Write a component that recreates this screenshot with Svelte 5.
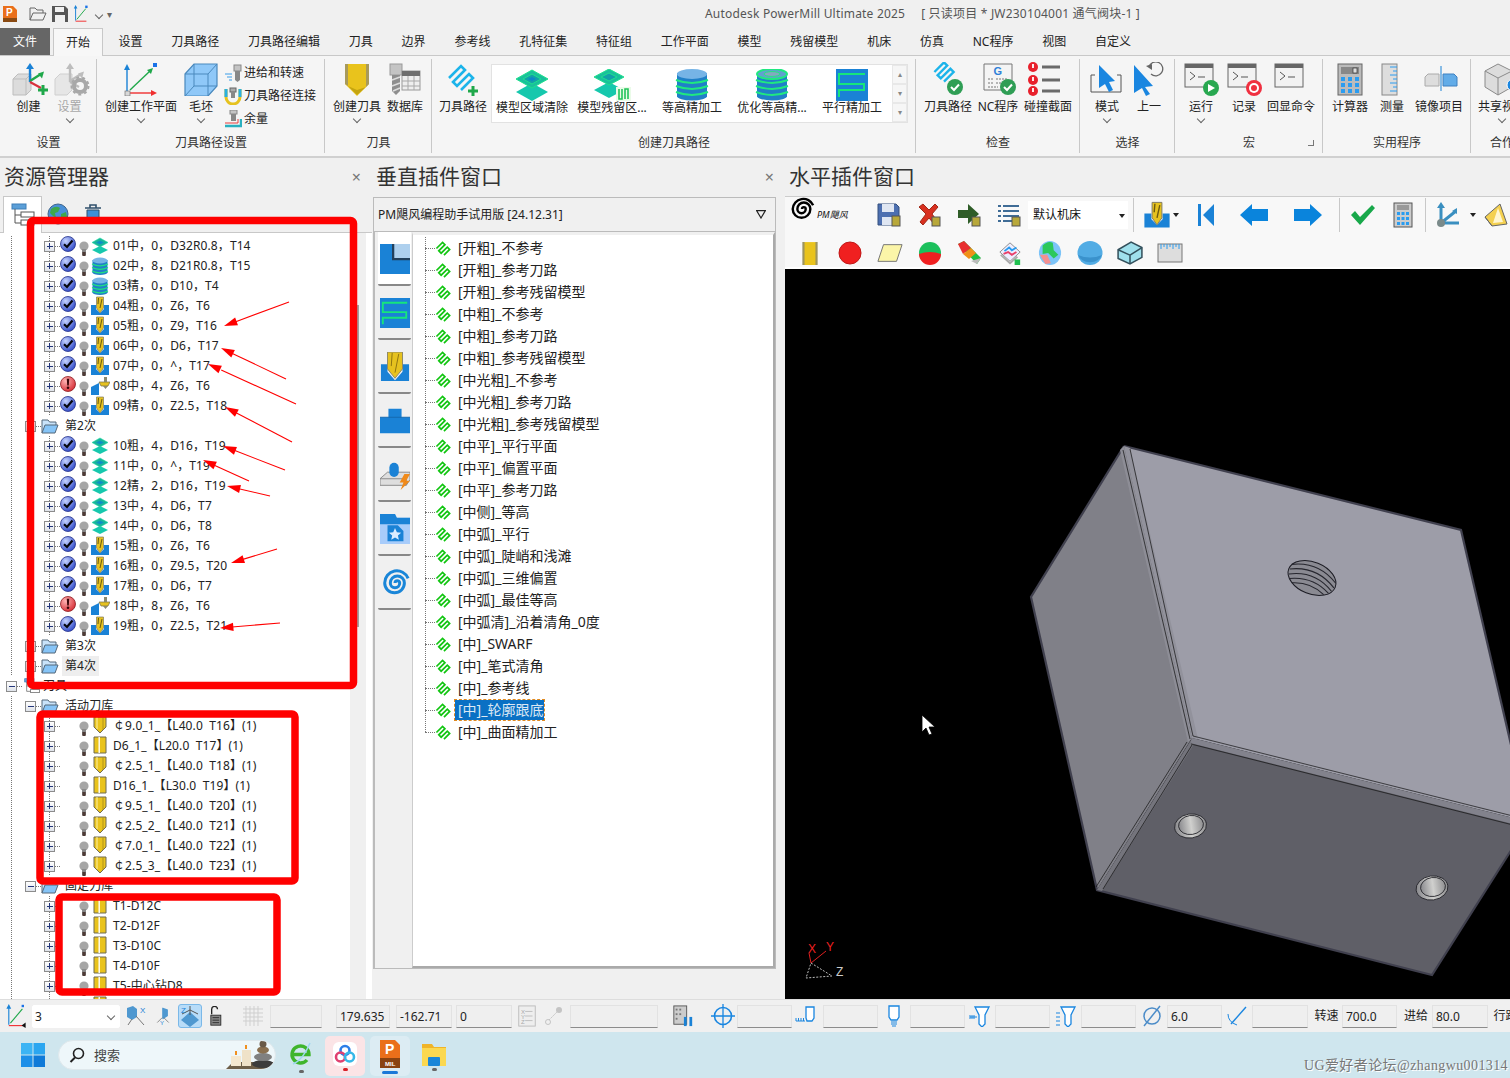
<script lang="ts">
  // PowerMill main window: ribbon, explorer tree, plugin panels, 3D view, status bar, taskbar.
  type Item = { l?: string; i?: string; w?: number; chev?: boolean; dis?: boolean; stack?: boolean; gallery?: boolean };

  const tabs = ['设置', '刀具路径', '刀具路径编辑', '刀具', '边界', '参考线', '孔特征集', '特征组', '工作平面', '模型', '残留模型', '机床', '仿真', 'NC程序', '视图', '自定义'];

  const groups: { label: string; w: number; pad: number; items: Item[] }[] = [
    { label: '设置', w: 97, pad: 8, items: [{ l: '创建', i: 'r-create', w: 41 }, { l: '设置', i: 'r-setup', w: 41, chev: true, dis: true }] },
    { label: '刀具路径设置', w: 228, pad: 4, items: [{ l: '创建工作平面', i: 'r-wp', w: 80, chev: true }, { l: '毛坯', i: 'r-stock', w: 40, chev: true }, { stack: true }] },
    { label: '刀具', w: 107, pad: 6, items: [{ l: '创建刀具', i: 'r-tool', w: 52, chev: true }, { l: '数据库', i: 'r-db', w: 44 }] },
    { label: '创建刀具路径', w: 484, pad: 5, items: [{ l: '刀具路径', i: 'r-tp', w: 52 }, { gallery: true }] },
    { label: '检查', w: 164, pad: 7, items: [{ l: '刀具路径', i: 'c-tp', w: 50 }, { l: 'NC程序', i: 'c-nc', w: 50 }, { l: '碰撞截面', i: 'c-col', w: 50 }] },
    { label: '选择', w: 95, pad: 6, items: [{ l: '模式', i: 's-mode', w: 42, chev: true }, { l: '上一', i: 's-prev', w: 42 }] },
    { label: '宏', w: 148, pad: 5, items: [{ l: '运行', i: 'm-run', w: 42, chev: true }, { l: '记录', i: 'm-rec', w: 44 }, { l: '回显命令', i: 'm-echo', w: 50 }] },
    { label: '实用程序', w: 148, pad: 6, items: [{ l: '计算器', i: 'u-calc', w: 42 }, { l: '测量', i: 'u-meas', w: 42 }, { l: '镜像项目', i: 'u-mir', w: 52 }] },
    { label: '合作', w: 62, pad: 0, items: [{ l: '共享视图', i: 'u-share', w: 62, chev: true }] }
  ];

  const smalls = [['进给和转速', 'sm-feed'], ['刀具路径连接', 'sm-link'], ['余量', 'sm-stock']];
  const gallery = [['模型区域清除', 'g-layer'], ['模型残留区...', 'g-rest'], ['等高精加工', 'g-db'], ['优化等高精...', 'g-db2'], ['平行精加工', 'g-par']];

  const op = (t: string, i: string, err = false) => ({ kind: 'op', t, i, err });
  const folder = (t: string, open = false, hover = false) => ({ kind: 'folder', t, open, hover });
  const tool = (t: string, flat = false) => ({ kind: 'tool', t, flat });

  const rows: any[] = [
    op('01中，0，D32R0.8，T14', 'o-layer'), op('02中，8，D21R0.8，T15', 'o-db'), op('03精，0，D10，T4', 'o-db'),
    op('04粗，0，Z6，T6', 'o-drill'), op('05粗，0，Z9，T16', 'o-drill'), op('06中，0，D6，T17', 'o-drill'),
    op('07中，0，^，T17', 'o-drill'), op('08中，4，Z6，T6', 'o-plug', true), op('09精，0，Z2.5，T18', 'o-drill'),
    folder('第2次'),
    op('10粗，4，D16，T19', 'o-layer'), op('11中，0，^，T19', 'o-layer'), op('12精，2，D16，T19', 'o-layer'),
    op('13中，4，D6，T7', 'o-layer'), op('14中，0，D6，T8', 'o-layer'), op('15粗，0，Z6，T6', 'o-drill'),
    op('16粗，0，Z9.5，T20', 'o-drill'), op('17粗，0，D6，T7', 'o-drill'), op('18中，8，Z6，T6', 'o-plug', true),
    op('19粗，0，Z2.5，T21', 'o-drill'),
    folder('第3次'), folder('第4次', false, true),
    { kind: 'root', t: '刀具' },
    folder('活动刀库', true),
    tool('￠9.0_1_【L40.0  T16】(1)'), tool('D6_1_【L20.0  T17】(1)', true), tool('￠2.5_1_【L40.0  T18】(1)'),
    tool('D16_1_【L30.0  T19】(1)', true), tool('￠9.5_1_【L40.0  T20】(1)'), tool('￠2.5_2_【L40.0  T21】(1)'),
    tool('￠7.0_1_【L40.0  T22】(1)'), tool('￠2.5_3_【L40.0  T23】(1)'),
    folder('固定刀库', true),
    tool('T1-D12C', true), tool('T2-D12F', true), tool('T3-D10C', true), tool('T4-D10F', true), tool('T5-中心钻D8', true), tool('', true)
  ];

  const strategies = ['[开粗]_不参考', '[开粗]_参考刀路', '[开粗]_参考残留模型', '[中粗]_不参考', '[中粗]_参考刀路', '[中粗]_参考残留模型', '[中光粗]_不参考', '[中光粗]_参考刀路', '[中光粗]_参考残留模型', '[中平]_平行平面', '[中平]_偏置平面', '[中平]_参考刀路', '[中侧]_等高', '[中弧]_平行', '[中弧]_陡峭和浅滩', '[中弧]_三维偏置', '[中弧]_最佳等高', '[中弧清]_沿着清角_0度', '[中]_SWARF', '[中]_笔式清角', '[中]_参考线', '[中]_轮廓跟底', '[中]_曲面精加工'];
  const sideTabs = ['v-corner', 'g-par', 'v-drill', 'v-boss', 'v-lightning', 'v-star', 'v-spiral'];

  const bar1 = [['t-save', 38], ['t-x', 41], ['t-arrow', 40], ['t-list', 39]];
  const bar2 = ['b-tool', 'b-red', 'b-para', 'b-gr', 'b-cone', 'b-sheet', 'b-globe', 'b-ball', 'b-box', 'b-ruler'];

  // letters that sit on an icon, drawn next to its <use>: [text, x, y, size, colour, weight]
  const iconText: Record<string, any[][]> = {
    'c-nc': [['G', 19.5, 13, 11, '#2f7fd8', 700]],
    's-x': [['X', 14, 8, 8, '#1a82d6', 400]],
    's-y': [['Y', 6, 18, 6, '#1a82d6', 400]],
    's-z': [['Z', 2, 8, 8, '#1a82d6', 400]],
    's-xyz': [['X', 5, 9, 6, '#aaa', 400], ['Y', 5, 14, 6, '#aaa', 400], ['Z', 5, 19, 6, '#aaa', 400]]
  };

  // status bar, left to right: icon slots, input fields and text slots with their widths
  const status: any[] = [
    { w: 32, i: 's-wp', s: 24 }, { f: 88, combo: '3' }, { w: 34, i: 's-x', s: 22 }, { w: 18, i: 's-y', s: 18 }, { w: 6 }, { w: 24, i: 's-z', s: 22, on: true },
    { w: 26, i: 's-lock', s: 20 }, { w: 8 }, { w: 34, i: 's-grid', s: 22 }, { f: 52 }, { w: 14 }, { f: 54, t: '179.635' }, { w: 6 }, { f: 56, t: '-162.71' }, { w: 4 }, { f: 56, t: '0' },
    { w: 30, i: 's-xyz', s: 22 }, { w: 24, i: 's-link', s: 20 }, { w: 4 }, { f: 88 }, { w: 50, i: 's-bars', s: 22 }, { w: 29, i: 's-cross', s: 24 }, { f: 55 },
    { w: 28, i: 's-t1', s: 22 }, { w: 3 }, { f: 55 }, { w: 32, i: 's-t2', s: 22 }, { f: 55 }, { w: 30, i: 's-t3', s: 22 }, { f: 55 }, { w: 31, i: 's-t4', s: 22 }, { f: 55 },
    { w: 31, i: 's-dia', s: 22 }, { f: 55, t: '6.0' }, { w: 30, i: 's-ang', s: 22 }, { f: 56 }, { w: 34, x: '转速' }, { f: 55, t: '700.0' }, { w: 35, x: '进给' }, { f: 56, t: '80.0' }, { w: 32, x: '行距' }
  ];

  const arrows = [
    [289, 302, 224, 326], [286, 379, 221, 348], [296, 404, 208, 364], [292, 442, 225, 407], [285, 470, 223, 446],
    [249, 481, 203, 460], [270, 496, 227, 486], [277, 549, 231, 563], [280, 623, 220, 628]
  ];
</script>

{#snippet ic(id, w, h)}
  <svg class="ic" width={w} height={h}>
    <use href="#{id}" />
    {#each iconText[id] ?? [] as t}
      <text x={t[1]} y={t[2]} font-size={t[3]} fill={t[4]} font-weight={t[5]} font-family="Liberation Sans">{t[0]}</text>
    {/each}
  </svg>
{/snippet}

<div class="win">
  <svg class="defs" width="0" height="0">
    <defs>
      <radialGradient id="blueball" cx="35%" cy="30%" r="75%"><stop offset="0" stop-color="#c6d4ff" /><stop offset="1" stop-color="#2f49c8" /></radialGradient>
      <radialGradient id="redball" cx="35%" cy="30%" r="75%"><stop offset="0" stop-color="#ffb4b4" /><stop offset="1" stop-color="#d62d35" /></radialGradient>
      <linearGradient id="hole" x1="0" y1="0" x2="1" y2="0"><stop offset="0" stop-color="#88888c" /><stop offset=".5" stop-color="#d0d0ce" /><stop offset="1" stop-color="#8e8e90" /></linearGradient>
    </defs>

    <!-- tree icons -->
    <symbol id="st-ok" viewBox="0 0 16 16"><circle cx="8" cy="8" r="7.5" fill="url(#blueball)" stroke="#23308a" stroke-width=".8" /><path d="M4 8.2 7 11 12.5 4.5" fill="none" stroke="#06070f" stroke-width="2.2" /></symbol>
    <symbol id="st-err" viewBox="0 0 16 16"><circle cx="8" cy="8" r="7.5" fill="url(#redball)" stroke="#8c1a20" stroke-width=".8" /><path d="M6.8 2.8h2.4l-.4 6.6H7.2Z" fill="#3a0508" /><circle cx="8" cy="11.8" r="1.3" fill="#3a0508" /></symbol>
    <symbol id="bulb" viewBox="0 0 12 16"><circle cx="6" cy="6" r="4.6" fill="#a6a6a6" /><rect x="4" y="9" width="4" height="6" fill="#8a8a8a" /><rect x="4.4" y="12" width="3.2" height="4" fill="#4e3b36" /></symbol>
    <symbol id="o-layer" viewBox="0 0 20 16"><path d="M10 8 18 12 10 16 2 12Z" fill="#16c8ad" /><path d="M10 0 18 4.5 10 9 2 4.5Z" fill="#19b39c" stroke="#1ee0a0" stroke-width=".6" /><path d="M10 2.8 13.8 4.5 10 6.3 6.2 4.5Z" fill="#0d8ec7" /></symbol>
    <symbol id="o-db" viewBox="0 0 20 18"><rect x="2.5" y="3" width="15" height="13" fill="#2080c8" /><ellipse cx="10" cy="3.5" rx="7.5" ry="3" fill="#76b4e6" /><ellipse cx="10" cy="15.5" rx="7.5" ry="2.5" fill="#2080c8" /><g fill="none" stroke="#20e080" stroke-width="1.3"><path d="M2 7q8 3.6 16 0" /><path d="M2 10.5q8 3.6 16 0" /><path d="M2 14q8 3.6 16 0" /></g></symbol>
    <symbol id="o-drill" viewBox="0 0 20 20"><path d="M1 9h5v4l4 4 4-4V9h5v10H1Z" fill="#1a82d6" /><path d="M6.500 1h7v11l-3.500 5-3.500-5Z" fill="#e6c21f" stroke="#7f7a62" stroke-width=".7" /><path d="M8.500 2 8 8M12 3l-2 9" stroke="#6e5a10" fill="none" /></symbol>
    <symbol id="o-plug" viewBox="0 0 20 20"><path d="M1 11 9 7v12H1Z" fill="#1a82d6" /><path d="M9 6h11l-2 4H11Z" fill="#e6c21f" stroke="#6e6a50" stroke-width=".7" /><path d="M14 1h3v5h-3ZM13 10h5l-2.500 3Z" fill="#8a8a70" /></symbol>
    <symbol id="tool" viewBox="0 0 14 18"><path d="M1 1h12v10l-6 6-6-6Z" fill="#e9c31c" stroke="#6f6a52" /><path d="M4 1v12" stroke="#fff2a8" /><path d="M10 1v13" stroke="#b09218" /></symbol>
    <symbol id="toolflat" viewBox="0 0 14 18"><path d="M1 1h12v16H1Z" fill="#e9c31c" stroke="#6f6a52" /><path d="M6.200 1v16" stroke="#fff" stroke-width="1.400" /></symbol>
    <symbol id="folder" viewBox="0 0 18 16"><path d="M1 15V2h6l1.600 2H15v3" fill="#c9e3fa" stroke="#55687a" /><path d="M1 15 4 7h13l-3 8Z" fill="#86c4f7" stroke="#55687a" /></symbol>
    <symbol id="zig" viewBox="0 0 18 18"><path d="M1.500 9 8 2.500 10.500 5 4 11.500 6.500 14 13 7.500 15.500 10 9.500 16" fill="none" stroke="#11c511" stroke-width="1.800" /></symbol>
    <symbol id="tree-tab" viewBox="0 0 24 24"><rect x="1" y="1" width="14" height="5" fill="#5b9fd8" stroke="#3f7fb8" /><path d="M4 6v14h6M4 12h6" fill="none" stroke="#555" /><rect x="10" y="9" width="13" height="5" fill="#fff" stroke="#555" /><rect x="10" y="17" width="13" height="5" fill="#fff" stroke="#555" /></symbol>
    <symbol id="globe" viewBox="0 0 22 22"><circle cx="11" cy="11" r="10" fill="#4a90d8" stroke="#40668c" /><path d="M4 6q5-4 9-1l-2 4-3 1 1 5-3-2-3-3Z" fill="#3ea84c" /><path d="M14 11l5-2 1 5-4 4-2-3Z" fill="#3ea84c" /></symbol>
    <symbol id="trash" viewBox="0 0 18 20"><path d="M1 4h16M6 4V1h6v3" fill="none" stroke="#30506c" stroke-width="1.600" /><path d="M3 6h12v13H3Z" fill="#3e8fd8" stroke="#30506c" /></symbol>

    <!-- ribbon, 48x34 -->
    <symbol id="r-create" viewBox="0 0 48 34"><path d="M8 17l5-5h13v16l-5 5H8Z" fill="#dcdcdc" stroke="#bdbdbd" /><path d="M8 17h13v16M21 17l5-5" fill="none" stroke="#bdbdbd" /><path d="M25 20V5" stroke="#1a82d6" stroke-width="2.400" /><path d="M25 1l4 6h-8Z" fill="#1a82d6" /><path d="M25 19 36 12" stroke="#1fa84a" stroke-width="2.400" /><path d="M39 9.500l-2 7-4-5Z" fill="#1fa84a" /><path d="M25 20l11 6" stroke="#d8323c" stroke-width="2.200" /><path d="M33 28h10M38 23v10" stroke="#1fa84a" stroke-width="3" /></symbol>
    <symbol id="r-setup" viewBox="0 0 48 34"><path d="M9 17l5-5h12v16l-5 5H9Z" fill="#e6e6e6" stroke="#cfcfcf" /><path d="M24 20V5M24 19 35 12M24 20l9 5" stroke="#bdbdbd" stroke-width="2.400" /><path d="M24 1l4 6h-8ZM38 9.500l-2 7-4-5Z" fill="#bdbdbd" /><circle cx="34" cy="24" r="6" fill="none" stroke="#a8a8a8" stroke-width="4" /><circle cx="34" cy="24" r="8.500" fill="none" stroke="#a8a8a8" stroke-width="2" stroke-dasharray="3 3" /></symbol>
    <symbol id="r-wp" viewBox="0 0 48 34"><path d="M10 30V6" stroke="#1a82d6" stroke-width="1.400" /><path d="M10 2l3 6H7Z" fill="#1a82d6" /><path d="M13 31h22" stroke="#f03030" stroke-width="1.400" /><path d="M40 31l-6 3v-6Z" fill="#f03030" /><path d="M13 28 33 9" stroke="#1fa84a" stroke-width="1.400" /><path d="M36 6l-2 6-4-4Z" fill="#1fa84a" /><rect x="8" y="29" width="5" height="5" fill="#d8d8d8" stroke="#777" stroke-width=".7" /><rect x="36" y="1" width="4" height="4" fill="#1a72e8" /></symbol>
    <symbol id="r-stock" viewBox="0 0 48 34"><path d="M8 12 17 2h23v22l-9 10H8Z" fill="#8fc8f8" stroke="#4a89bd" stroke-width="1.200" /><path d="M8 12h23v22M31 12l9-10M17 2v22H40M17 24l-9 10" fill="none" stroke="#4a89bd" /></symbol>
    <symbol id="r-tool" viewBox="0 0 48 34"><path d="M12 2h24v20L24 34 12 22Z" fill="#e9c31c" /><path d="M12 2h3v22l-3-2ZM33 2h3v20l-3 3Z" fill="#a89a5a" /><path d="M15 24 24 33 33 25 24 28Z" fill="#c4a410" /></symbol>
    <symbol id="r-db" viewBox="0 0 48 34"><rect x="9" y="2" width="12" height="11" fill="#c4c4c4" stroke="#9a9a9a" /><path d="M11 13h8v16l-4 4-4-4Z" fill="#8e8e8e" /><path d="M11 18l8-3M11 24l8-3M12 29l7-3" stroke="#ddd" stroke-width="1.500" /><rect x="21" y="9" width="18" height="19" fill="#eee" stroke="#9a9a9a" /><rect x="21" y="9" width="18" height="5" fill="#6e6e6e" /><path d="M21 19h18M21 24h18M27 14v14M33 14v14" stroke="#a8a8a8" /></symbol>
    <symbol id="r-tp" viewBox="0 0 48 34"><g transform="translate(7 1)"><path d="M3 15 15 3 19 7 7 19 11 23 23 11 27 15 15 27" fill="none" stroke="#1cb4ea" stroke-width="2.600" /></g><path d="M29 29h10M34 24v10" stroke="#1fa84a" stroke-width="3" /></symbol>
    <symbol id="g-layer" viewBox="0 0 40 32"><path d="M20 14 36 23 20 32 4 23Z" fill="#16c8ad" /><path d="M20 1 36 10 20 19 4 10Z" fill="#19c09c" stroke="#1ee08c" /><path d="M20 5 29 10 20 15 11 10Z" fill="#12a0a8" stroke="#1ee08c" /><path d="M20 8 24 10 20 12 16 10Z" fill="#0d86c7" /></symbol>
    <symbol id="g-rest" viewBox="0 0 40 32"><path d="M17 13 32 21 17 29 2 21Z" fill="#16c8ad" /><path d="M17 0 32 8 17 16 2 8Z" fill="#19c09c" stroke="#1ee08c" /><path d="M17 4 25 8 17 12 9 8Z" fill="#12a0a8" stroke="#1ee08c" /><rect x="24" y="18" width="15" height="14" fill="#eafbe8" /><path d="M27 20v10h3V20M33 30V20h3v10" fill="none" stroke="#22c45a" stroke-width="1.600" /></symbol>
    <symbol id="g-db" viewBox="0 0 40 32"><rect x="5" y="4" width="30" height="24" fill="#2080c8" /><ellipse cx="20" cy="5" rx="15" ry="5" fill="#76b4e6" /><ellipse cx="20" cy="27" rx="15" ry="4.500" fill="#2080c8" /><g fill="none" stroke="#20e880" stroke-width="2"><path d="M4 11q16 6 32 0" /><path d="M4 17q16 6 32 0" /><path d="M4 23q16 6 32 0" /></g></symbol>
    <symbol id="g-db2" viewBox="0 0 40 32"><rect x="5" y="4" width="30" height="24" fill="#2080c8" /><ellipse cx="20" cy="5" rx="15" ry="5" fill="#62a0d0" stroke="#20e880" stroke-width="2" /><ellipse cx="20" cy="5" rx="8" ry="2.400" fill="#85a8c0" stroke="#20e880" /><ellipse cx="20" cy="27" rx="15" ry="4.500" fill="#2080c8" /><g fill="none" stroke="#20e880" stroke-width="2"><path d="M4 11q16 6 32 0" /><path d="M4 17q16 6 32 0" /><path d="M4 23q16 6 32 0" /></g></symbol>
    <symbol id="g-par" viewBox="0 0 32 32"><rect width="32" height="32" fill="#1a82d6" /><path d="M3 28V21H28V15H3V5H29" fill="none" stroke="#16e57c" stroke-width="2" /></symbol>
    <symbol id="c-tp" viewBox="0 0 48 34"><g transform="translate(8 -2) scale(.8)"><path d="M3 15 15 3 19 7 7 19 11 23 23 11 27 15 15 27" fill="none" stroke="#1cb4ea" stroke-width="3" /></g><circle cx="31" cy="25" r="8" fill="#2f9e55" /><path d="M27 25l3 3 5-5.500" fill="none" stroke="#fff" stroke-width="2" /></symbol>
    <symbol id="c-nc" viewBox="0 0 48 34"><path d="M10 2h28v26H10Z" fill="#f4f4f4" stroke="#777" /><path d="M14 17h6M22 17h12M14 21h6M22 21h12M14 25h10" stroke="#777" stroke-dasharray="2 1" /><circle cx="34" cy="25" r="8" fill="#2f9e55" /><path d="M30 25l3 3 5-5.500" fill="none" stroke="#fff" stroke-width="2" /></symbol>
    <symbol id="c-col" viewBox="0 0 48 34"><g fill="#e8202c"><circle cx="9" cy="5" r="5" /><circle cx="9" cy="18" r="5" /><circle cx="9" cy="29" r="5" /></g><path d="M9 2v4M9 15v4M9 26v4" stroke="#fff" stroke-width="1.800" /><path d="M18 5h18M18 18h18M18 29h18" stroke="#6a6a6a" stroke-width="3" /></symbol>
    <symbol id="s-mode" viewBox="0 0 48 34"><path d="M12 13H8v17h30V13h-4" fill="none" stroke="#555" /><path d="M16 3 32 19l-6 1 4 8-4 2-4-8-6 4Z" fill="#1a86e0" /></symbol>
    <symbol id="s-prev" viewBox="0 0 48 34"><path d="M9 3 28 24l-8 1 5 7-4 2-4-8-8 5Z" fill="#1a86e0" /><path d="M24 5a7 7 0 1 1 2 7" fill="none" stroke="#666" stroke-width="1.300" /><path d="M21 4l6-2v6Z" fill="#666" /></symbol>
    <symbol id="term" viewBox="0 0 48 34"><rect x="8" y="2" width="28" height="23" fill="#f2f2f2" stroke="#666" /><rect x="8" y="2" width="28" height="4" fill="#666" /><path d="M13 10l5 4-5 4M21 15h7" fill="none" stroke="#555" /></symbol>
    <symbol id="m-run" viewBox="0 0 48 34"><use href="#term" width="48" height="34" /><circle cx="34" cy="26" r="8" fill="#28a850" /><path d="M31 22l7 4-7 4Z" fill="#fff" /></symbol>
    <symbol id="m-rec" viewBox="0 0 48 34"><use href="#term" width="48" height="34" /><circle cx="34" cy="26" r="8" fill="#f03040" /><circle cx="34" cy="26" r="5" fill="#fff" /><circle cx="34" cy="26" r="3" fill="#f03040" /></symbol>
    <symbol id="m-echo" viewBox="0 0 48 34"><use href="#term" width="48" height="34" /></symbol>
    <symbol id="u-calc" viewBox="0 0 48 34"><rect x="12" y="2" width="24" height="31" fill="#bbb" stroke="#666" /><rect x="15" y="5" width="18" height="7" fill="#888" /><rect x="27" y="6" width="4" height="5" fill="#ddd" stroke="#333" stroke-width=".7" /><g fill="#2a9cf0"><rect x="15" y="15" width="4" height="4" /><rect x="22" y="15" width="4" height="4" /><rect x="29" y="15" width="4" height="4" /><rect x="15" y="21" width="4" height="4" /><rect x="22" y="21" width="4" height="4" /><rect x="29" y="21" width="4" height="4" /><rect x="15" y="27" width="4" height="4" /><rect x="22" y="27" width="4" height="4" /><rect x="29" y="27" width="4" height="4" /></g></symbol>
    <symbol id="u-meas" viewBox="0 0 48 34"><rect x="14" y="2" width="15" height="31" fill="#ddd" stroke="#888" /><path d="M29 5h-7M29 9h-4M29 13h-7M29 17h-4M29 21h-7M29 25h-4M29 29h-7" stroke="#2a9cf0" /></symbol>
    <symbol id="u-mir" viewBox="0 0 48 34"><path d="M10 15l3-3h11v12H10Z" fill="#ddd" stroke="#aaa" /><path d="M26 4v25" stroke="#1a82d6" /><path d="M28 12h11l3 3v9H28Z" fill="#62ace8" stroke="#3f80c0" /></symbol>
    <symbol id="u-share" viewBox="0 0 48 34"><path d="M7 9 20 2l14 7v16l-14 8-13-8Z" fill="#dcdcdc" stroke="#8a8a8a" /><path d="M7 9l13 7 14-7M20 16v17" fill="none" stroke="#8a8a8a" /><circle cx="35" cy="23" r="6" fill="#1a86e0" stroke="#fff" /></symbol>
    <symbol id="sm-feed" viewBox="0 0 18 18"><path d="M1 10h7M3 13h5M5 16h3" stroke="#3a9de8" /><rect x="10" y="1" width="7" height="6" fill="#c4c4c4" stroke="#888" /><path d="M11 7h5v9l-2.500 2-2.500-2Z" fill="#888" /></symbol>
    <symbol id="sm-link" viewBox="0 0 18 18"><path d="M2 2v8a7 7 0 0 0 14 0V2" fill="none" stroke="#e6c21f" stroke-width="3" /><path d="M2 2v8M16 2v8" stroke="#2ab0e0" stroke-width="3" /><rect x="6" y="1" width="6" height="4" fill="#aaa" stroke="#666" /><path d="M7 5h4v6H7Z" fill="#888" /></symbol>
    <symbol id="sm-stock" viewBox="0 0 18 18"><rect x="6" y="0" width="7" height="4" fill="#c4c4c4" stroke="#888" /><path d="M7 4h5v7H7Z" fill="#888" /><path d="M1 13h13V9" fill="none" stroke="#e83a3a" /><path d="M1 16h16V9" fill="none" stroke="#2ab0c0" stroke-width="2.400" /></symbol>

    <!-- plugin side tabs, 32x32 -->
    <symbol id="v-corner" viewBox="0 0 32 32"><rect width="32" height="32" fill="#1a82d6" /><path d="M15 0h17v15H15Z" fill="#aed0ee" /><path d="M14 0v16h18" fill="none" stroke="#23405c" stroke-width="2.400" /></symbol>
    <symbol id="v-drill" viewBox="0 0 32 32"><path d="M1 13h7v8l8 9 8-9v-8h7v18H1Z" fill="#1a82d6" /><path d="M8 0h16v18l-8 10-8-10Z" fill="#e6c21f" stroke="#8a8468" /><path d="M13 1l-1 14M20 2l-4 20" stroke="#8a7010" fill="none" /></symbol>
    <symbol id="v-boss" viewBox="0 0 32 32"><path d="M9 3h14v9h9v17H0V12h9Z" fill="#1a82d6" /><path d="M0 12h32" stroke="#1468ae" /></symbol>
    <symbol id="v-lightning" viewBox="0 0 32 32"><path d="M0 20 8 13h24v8l-4 6H0Z" fill="#dedede" stroke="#888" /><path d="M0 20h28v7" fill="none" stroke="#888" /><rect x="10" y="3" width="10" height="15" rx="5" fill="#1a82d6" /><path d="M26 15l6 0-4 7h4L22 32l3-8h-4Z" fill="#f08a1a" /></symbol>
    <symbol id="v-star" viewBox="0 0 32 32"><path d="M0 0h16l2 4h14v28H0Z" fill="#a8ccfa" /><path d="M0 0h16l2 4h14v7H0Z" fill="#1a82d6" /><path d="M8 12h11l6 6v11H8Z" fill="#1a82d6" /><path d="M16 15l2 4.500 4.600.4-3.500 3 1 4.600-4.100-2.400-4 2.400 1-4.600-3.500-3 4.600-.4Z" fill="#dcecff" /></symbol>
    <symbol id="v-spiral" viewBox="0 0 32 32"><path d="M16 16a2.500 2.500 0 0 1 5 0 5 5 0 0 1-10 0 7.500 7.500 0 0 1 15 0 10.500 10.500 0 0 1-21 0 13 13 0 0 1 25-5" fill="none" stroke="#1a86d8" stroke-width="3.200" /></symbol>

    <!-- horizontal toolbar -->
    <symbol id="t-spiral" viewBox="0 0 28 28"><path d="M14 14a2 2 0 0 1 4 0 4.500 4.500 0 0 1-9 0 7 7 0 0 1 14 0 9.500 9.500 0 0 1-19 0 11.500 11.500 0 0 1 22-4" fill="none" stroke="#000" stroke-width="2.600" /></symbol>
    <symbol id="t-save" viewBox="0 0 24 24"><path d="M1 1h18l3 3v18H1Z" fill="#4c6fb0" stroke="#34507e" /><rect x="5" y="1" width="12" height="8" fill="#dfe6f2" /><rect x="5" y="14" width="11" height="8" fill="#dfe6f2" /><rect x="15" y="13" width="8" height="10" fill="#b8a83a" stroke="#555" /></symbol>
    <symbol id="t-x" viewBox="0 0 24 24"><path d="M2 4 6 1l6 6 6-6 3 3-6 7 6 8-3 3-6-7-6 7-3-3 6-8Z" fill="#d83020" stroke="#a02818" /><rect x="15" y="14" width="8" height="9" fill="#b8a83a" stroke="#555" /></symbol>
    <symbol id="t-arrow" viewBox="0 0 24 24"><path d="M1 7h10V1l11 10-11 10v-6H1Z" fill="#2f5d28" /><rect x="15" y="14" width="8" height="9" fill="#b8a83a" stroke="#555" /></symbol>
    <symbol id="t-list" viewBox="0 0 24 24"><path d="M1 3h3M6 3h16M1 8h3M6 8h16M1 13h3M6 13h16M1 18h3M6 18h16" stroke="#3f6c96" stroke-width="2" /><rect x="15" y="14" width="8" height="9" fill="#b8a83a" stroke="#555" /></symbol>
    <symbol id="t-k" viewBox="0 0 20 24"><path d="M2 1h3v22H2ZM18 1v22L7 12Z" fill="#1a82d6" /></symbol>
    <symbol id="t-left" viewBox="0 0 28 22"><path d="M0 11 12 0v5h16v12H12v5Z" fill="#0a84dc" /></symbol>
    <symbol id="t-right" viewBox="0 0 28 22"><path d="M28 11 16 0v5H0v12h16v5Z" fill="#0a84dc" /></symbol>
    <symbol id="t-check" viewBox="0 0 26 22"><path d="M1 11 5 7l5 6L22 1l3 3L10 21Z" fill="#18a84a" /></symbol>
    <symbol id="t-calc" viewBox="0 0 20 26"><rect x="1" y="1" width="18" height="24" fill="#ccc" stroke="#555" /><rect x="4" y="3" width="12" height="5" fill="#999" /><g fill="#2a9cf0"><rect x="4" y="10" width="3" height="3" /><rect x="8.500" y="10" width="3" height="3" /><rect x="13" y="10" width="3" height="3" /><rect x="4" y="15" width="3" height="3" /><rect x="8.500" y="15" width="3" height="3" /><rect x="13" y="15" width="3" height="3" /><rect x="4" y="20" width="3" height="3" /><rect x="8.500" y="20" width="3" height="3" /><rect x="13" y="20" width="3" height="3" /></g></symbol>
    <symbol id="t-axes" viewBox="0 0 26 26"><path d="M6 21V3M6 21 21 9M6 21h18" stroke="#3a8fc0" stroke-width="3" fill="none" /><path d="M6 0l4 6H2Z" fill="#3a8fc0" /><path d="M22 6l0 6-5-3Z" fill="#3a8fc0" /><circle cx="6" cy="21" r="4" fill="#7a8a8a" /></symbol>
    <symbol id="t-cone" viewBox="0 0 26 26"><path d="M2 15 17 2l7 20-15 2Z" fill="#f4d050" stroke="#666" /><path d="M2 15l7 9" stroke="#666" /><path d="M15 6l5 14-10 1" fill="#fff6d0" /></symbol>
    <symbol id="b-tool" viewBox="0 0 16 22"><path d="M2 1h12v21H2Z" fill="#e9c31c" /><path d="M2 1v21M14 1v21" stroke="#9c9460" stroke-width="2" /></symbol>
    <symbol id="b-red" viewBox="0 0 24 24"><circle cx="12" cy="12" r="11" fill="#f02020" stroke="#c01818" /></symbol>
    <symbol id="b-para" viewBox="0 0 28 20"><path d="M7 1h20l-6 18H1Z" fill="#fbf5a8" stroke="#6e6e6e" /></symbol>
    <symbol id="b-gr" viewBox="0 0 24 24"><circle cx="12" cy="12" r="11" fill="#1cc05c" /><path d="M1 13q11-4 22 0a11 11 0 0 1-22 0Z" fill="#f02020" /></symbol>
    <symbol id="b-cone" viewBox="0 0 26 24"><path d="M1 3 7 0l17 17-4 6Z" fill="#22c040" /><path d="M1 3 7 0l7 7-8 6Z" fill="#e83030" /><path d="M6 13l8-6 5 5-7 6Z" fill="#f09018" /><path d="M24 17l-4 6-6-3Z" fill="#bbb" /></symbol>
    <symbol id="b-sheet" viewBox="0 0 26 26"><path d="M2 12 13 2l11 10-11 10Z" fill="#eef" stroke="#888" /><path d="M7 11l5-4 3 3 5-3" fill="none" stroke="#2a9cf0" stroke-width="2" /><path d="M6 14l5-2 4 3 5-3" fill="none" stroke="#e8406a" stroke-width="2" /><path d="M3 15l10 9 8-7" fill="none" stroke="#aaa" stroke-width="2" /><rect x="18" y="20" width="6" height="6" fill="#20c050" /></symbol>
    <symbol id="b-globe" viewBox="0 0 24 26"><ellipse cx="12" cy="13" rx="12" ry="13" fill="#7cc4f8" /><path d="M4 5q6-6 11-3l1 8 5 5-5 4-6-6-6 1Z" fill="#2cc85c" /><path d="M1 15l8 0 4 9-6 1Z" fill="#f49090" /></symbol>
    <symbol id="b-ball" viewBox="0 0 26 24"><ellipse cx="13" cy="12" rx="12.500" ry="12" fill="#52ace4" /><path d="M1 14q12 5 24 0a12.500 10 0 0 1-24 0Z" fill="#3a92cc" /></symbol>
    <symbol id="b-box" viewBox="0 0 24 22"><path d="M1 8 13 1l10 5v9L12 21l-11-5Z" fill="#9fe0ec" stroke="#33505c" stroke-width="1.400" /><path d="M1 8l11 5v8M12 13l11-7" fill="none" stroke="#33505c" stroke-width="1.400" /></symbol>
    <symbol id="b-ruler" viewBox="0 0 26 20"><rect x="1" y="1" width="24" height="18" fill="#ddd" stroke="#777" /><path d="M4 1v5M7 1v3M10 1v5M13 1v3M16 1v5M19 1v3M22 1v5" stroke="#2a9cf0" /></symbol>

    <!-- status bar -->
    <symbol id="s-wp" viewBox="0 0 24 30"><path d="M3 26V4" stroke="#1a82d6" stroke-width="1.400" /><path d="M3 0l3 6H0Z" fill="#1a82d6" /><path d="M5 24 20 6" stroke="#1fa84a" stroke-width="1.400" /><rect x="19" y="1" width="3" height="3" fill="#1a72e8" /><path d="M3 27h18" stroke="#f03030" stroke-width="1.400" /><path d="M19 27l5-4v7Z" fill="#111" /></symbol>
    <symbol id="s-x" viewBox="0 0 22 22"><path d="M1 3l6-2 4 3v8l-5 3-5-3Z" fill="#4f98d0" /><path d="M10 11l8 9M6 14l-4 6" stroke="#777" /></symbol>
    <symbol id="s-y" viewBox="0 0 18 22"><path d="M9 1l6 2v8l-6 4-1-1V1Z" fill="#4f98d0" /><path d="M8 13l-6 6M10 13l6 6" stroke="#777" /></symbol>
    <symbol id="s-z" viewBox="0 0 22 22"><path d="M11 7l9 8-9 7-9-7Z" fill="#4f98d0" /><path d="M11 1v9M3 9l8-4M19 9l-8-4" stroke="#555" /></symbol>
    <symbol id="s-lock" viewBox="0 0 20 24"><path d="M6 10V4a3.500 3.500 0 0 1 7 0" fill="none" stroke="#222" stroke-width="1.600" /><rect x="5" y="11" width="12" height="12" fill="#888" stroke="#222" /><path d="M7 14h8M7 17h8M7 20h8" stroke="#222" /></symbol>
    <symbol id="s-grid" viewBox="0 0 22 22"><path d="M1 4h20M1 8h20M1 12h20M1 16h20M4 1v20M8 1v20M12 1v20M16 1v20" stroke="#cfcfcf" /></symbol>
    <symbol id="s-xyz" viewBox="0 0 22 24"><rect x="2" y="1" width="18" height="22" fill="#eee" stroke="#bbb" /><path d="M9 7h8M9 12h8M9 17h8" stroke="#bbb" /></symbol>
    <symbol id="s-link" viewBox="0 0 20 20"><circle cx="15" cy="4" r="3" fill="#c4c4c4" /><circle cx="4" cy="16" r="2.500" fill="none" stroke="#c4c4c4" /><path d="M5 14 13 6" stroke="#c4c4c4" stroke-dasharray="2 1" /></symbol>
    <symbol id="s-bars" viewBox="0 0 22 24"><rect x="1" y="1" width="14" height="20" fill="#ccc" stroke="#555" /><g fill="#777"><rect x="3" y="4" width="2" height="2" /><rect x="7" y="4" width="2" height="2" /><rect x="3" y="9" width="2" height="2" /><rect x="7" y="9" width="2" height="2" /><rect x="3" y="14" width="2" height="2" /></g><rect x="12" y="13" width="3" height="10" fill="#1a82d6" /><rect x="18" y="13" width="3" height="10" fill="#1a82d6" /></symbol>
    <symbol id="s-cross" viewBox="0 0 24 24"><circle cx="12" cy="12" r="8.500" fill="none" stroke="#1a86e0" stroke-width="1.600" /><path d="M12 0v24M0 12h24" stroke="#1a86e0" stroke-width="1.300" /></symbol>
    <symbol id="s-t1" viewBox="0 0 22 22"><path d="M11 2h8v11l-2 3h-5l-1-3Z" fill="#fff" stroke="#1a86e0" stroke-width="1.300" /><path d="M1 16v-3M3.500 16v-3M6 16v-3M8.500 16v-3" stroke="#1a86e0" /><path d="M1 16h9" stroke="#1a86e0" /></symbol>
    <symbol id="s-t2" viewBox="0 0 22 22"><path d="M6 1h10v11l-2 3H8l-2-3Z" fill="#fff" stroke="#1a86e0" stroke-width="1.300" /><path d="M8 17h6M8 19h6M9 21h4" stroke="#1a86e0" /></symbol>
    <symbol id="s-t3" viewBox="0 0 22 22"><path d="M6 2h14l-4 8v9l-3 3-3-3v-9Z" fill="#fff" stroke="#1a86e0" stroke-width="1.300" /><path d="M1 12h7M1 10v4M3 10v4M5 10v4" stroke="#1a86e0" /></symbol>
    <symbol id="s-t4" viewBox="0 0 22 22"><path d="M6 2h14l-4 8v9l-3 3-3-3v-9Z" fill="#fff" stroke="#1a86e0" stroke-width="1.300" /><path d="M1 8h4M1 12h4M1 16h4M1 20h4" stroke="#1a86e0" /></symbol>
    <symbol id="s-dia" viewBox="0 0 22 22"><circle cx="11" cy="11" r="8" fill="none" stroke="#4c8cc8" stroke-width="1.500" /><path d="M3 21 19 1" stroke="#4c8cc8" stroke-width="1.500" /></symbol>
    <symbol id="s-ang" viewBox="0 0 22 22"><path d="M5 19 20 2" stroke="#1a86e0" stroke-width="1.400" /><path d="M2 9q0 8 9 11" fill="none" stroke="#1a86e0" /></symbol>
  </svg>

  <header class="title">
    <span class="qat">
      <svg class="ic" width="16" height="18" viewBox="0 0 16 18"><path d="M1 1h10l4 4v12H1Z" fill="#ea6f1a" /><rect x="1" y="13" width="14" height="4" fill="#8a4a12" /><text x="4" y="11" font-size="10" font-weight="700" fill="#fff" font-family="Liberation Sans">P</text></svg>
      <svg class="ic q1" width="18" height="16" viewBox="0 0 18 16"><path d="M1 14V2h5l2 2h6v3M1 14l3-7h13l-3 7Z" fill="none" stroke="#666" /></svg>
      <svg class="ic q2" width="18" height="18" viewBox="0 0 18 18"><path d="M1 1h13l3 3v13H1Z" fill="#555" /><rect x="4" y="2" width="9" height="5" fill="#f0f0f0" /><rect x="4" y="10" width="10" height="7" fill="#f0f0f0" /></svg>
      <svg class="ic q3" width="18" height="18" viewBox="0 0 24 30"><path d="M3 26V4" stroke="#1a82d6" stroke-width="1.600" /><path d="M3 0l3 6H0Z" fill="#1a82d6" /><path d="M5 24 20 6" stroke="#1fa84a" stroke-width="1.600" /><rect x="19" y="1" width="4" height="4" fill="#1a72e8" /><path d="M3 27h18" stroke="#f03030" stroke-width="1.600" /></svg>
      <span class="chev q4"></span>
      <span class="qmore">▾</span>
    </span>
    <span class="caption">Autodesk PowerMill Ultimate 2025</span>
    <span class="caption doc">[ 只读项目 * JW230104001 通气阀块-1 ]</span>
  </header>

  <nav class="tabs">
    <span class="file">文件</span>
    <span class="tab on">开始</span>
    {#each tabs as t}<span class="tab">{t}</span>{/each}
  </nav>

  <div class="ribbon">
    {#each groups as g}
      <section class="group" style="width:{g.w}px">
        <div class="items" style="padding-left:{g.pad}px">
          {#each g.items as it}
            {#if it.stack}
              <div class="stack">
                {#each smalls as s}<div class="small">{@render ic(s[1], 18, 18)}<span>{s[0]}</span></div>{/each}
              </div>
            {:else if it.gallery}
              <div class="gallery">
                {#each gallery as g2}
                  <div class="gitem">{@render ic(g2[1], 48, 32)}<span>{g2[0]}</span></div>
                {/each}
                <div class="gscroll"><span>▴</span><span>▾</span><span>▾</span></div>
              </div>
            {:else}
              <div class="btn" class:dis={it.dis} style="width:{it.w}px">
                {@render ic(it.i, 48, 34)}
                <span class="blabel">{it.l}</span>
                {#if it.chev}<span class="chev"></span>{/if}
              </div>
            {/if}
          {/each}
        </div>
        <div class="glabel">{g.label}{#if g.label === '宏'}<span class="launcher"></span>{/if}</div>
      </section>
    {/each}
  </div>

  <main class="panes">
    <section class="pane left">
      <div class="ptitle"><h2>资源管理器</h2><span class="close">×</span></div>
      <div class="ltabs">
        <span class="ltab on">{@render ic('tree-tab', 24, 24)}</span>
        <span class="ltab">{@render ic('globe', 22, 22)}</span>
        <span class="ltab">{@render ic('trash', 18, 20)}</span>
      </div>
      <div class="treewrap">
        <div class="tree">
          {#each rows as r}
            {#if r.kind === 'op'}
              <div class="row l3">
                <span class="exp"></span><span class="tick"></span>
                <span class="status">{@render ic(r.err ? 'st-err' : 'st-ok', 16, 16)}</span>
                <span class="bulb">{@render ic('bulb', 12, 16)}</span>
                <span class="opi">{@render ic(r.i, 20, 20)}</span>
                <span class="lbl">{r.t}</span>
              </div>
            {:else if r.kind === 'tool'}
              <div class="row l3">
                <span class="exp"></span><span class="tick"></span>
                <span class="nostatus"></span>
                <span class="bulb">{@render ic('bulb', 12, 16)}</span>
                <span class="tooli">{@render ic(r.flat ? 'toolflat' : 'tool', 14, 18)}</span>
                <span class="lbl tl">{r.t}</span>
              </div>
            {:else if r.kind === 'folder'}
              <div class="row l2">
                <span class="exp" class:open={r.open}></span><span class="tick"></span>
                {@render ic('folder', 18, 16)}
                <span class="lbl fl" class:hover={r.hover}>{r.t}</span>
              </div>
            {:else}
              <div class="row l1">
                <span class="exp open"></span><span class="tick"></span>
                <span class="rooti">{@render ic('tree-tab', 16, 16)}</span>
                <span class="lbl">{r.t}</span>
              </div>
            {/if}
          {/each}
        </div>
        <div class="vscroll"><i></i></div>
      </div>
    </section>

    <section class="pane mid">
      <div class="ptitle"><h2>垂直插件窗口</h2><span class="close">×</span></div>
      <div class="frame">
        <div class="fhead"><span>PM飓风编程助手试用版 [24.12.31]</span><svg class="ic" width="10" height="9" viewBox="0 0 10 9"><path d="M.7.7h8.600L5 8Z" fill="none" stroke="#222" stroke-width="1.200" /></svg></div>
        <div class="fbody">
          <div class="sidetabs">
            {#each sideTabs as s, i}
              <div class="stab" class:on={i === 0}>{@render ic(s, 30, 30)}</div>
            {/each}
          </div>
          <div class="strats">
            {#each strategies as s, i}
              <div class="strat" class:last={i === strategies.length - 1}>
                <span class="stick"></span>{@render ic('zig', 17, 17)}
                <span class="stext" class:sel={s === '[中]_轮廓跟底'}>{s}</span>
              </div>
            {/each}
          </div>
        </div>
      </div>
    </section>

    <section class="pane right">
      <div class="ptitle"><h2>水平插件窗口</h2></div>
      <div class="bars">
        <div class="bar r1">
          <span class="logo">{@render ic('t-spiral', 26, 26)}<em>PM飓风</em></span>
          {#each bar1 as b}<span class="slot" style="width:{b[1]}px">{@render ic(b[0], 24, 24)}</span>{/each}
          <span class="tcombo">默认机床<i class="caret"></i></span>
          <span class="vsep s1"></span>
          <span class="slot w33">{@render ic('o-drill', 28, 28)}</span><i class="caret c2"></i>
          <span class="slot w40">{@render ic('t-k', 20, 24)}</span>
          <span class="slot w56">{@render ic('t-left', 28, 22)}</span>
          <span class="slot w52">{@render ic('t-right', 28, 22)}</span>
          <span class="vsep"></span>
          <span class="slot w36">{@render ic('t-check', 26, 22)}</span>
          <span class="slot w44">{@render ic('t-calc', 20, 26)}</span>
          <span class="vsep s2"></span>
          <span class="slot w44">{@render ic('t-axes', 26, 26)}</span><i class="caret c2 c3"></i>
          <span class="slot w36">{@render ic('t-cone', 26, 26)}</span>
        </div>
        <div class="bar r2">
          {#each bar2 as b}<span class="slot w40">{@render ic(b, 26, 24)}</span>{/each}
        </div>
      </div>
      <div class="view">
        <svg width="725" height="731" viewBox="785 268 725 731">
          <path d="M1124 445 1461 529 1529 821 1192 737Z" fill="#9d9da8" />
          <path d="M1124 445 1192 737 1097 889 1031 596Z" fill="#808088" />
          <path d="M1192 737 1529 821 1432 974 1097 889Z" fill="#5f5f67" />
          <g fill="none" stroke="#40404e" stroke-width="2.200">
            <path d="M1124 445 1461 529 1529 821M1124 445 1031 596 1097 889 1432 974 1529 821" />
          </g>
          <path d="M1124 445 1192 737 1188 741 1120 449Z" fill="#8d8d96" />
          <path d="M1124 445 1130 447 1198 738 1192 737Z" fill="#92929c" />
          <path d="M1192 737 1529 821 1529 827 1190 742Z" fill="#82828c" />
          <path d="M1190 741 1097 889 1102 890 1194 743Z" fill="#74747c" />
          <g fill="none" stroke="#111" stroke-width=".7">
            <path d="M1123 449 1190 738M1130 448 1193 735 1529 819M1191 743 1529 828M1187 741 1096 886M1192 744 1103 888" />
          </g>
          <g transform="rotate(22 1312 577)">
            <ellipse cx="1312" cy="577" rx="25" ry="16" fill="#8a8a92" stroke="#1c1c24" />
            <g fill="none" stroke="#26262e" stroke-width="1.100">
              <path d="M1288 572q24-13 48 1M1288 577q24-13 48 1M1289 582q23-13 46 0M1291 586q21-11 42-1M1295 589q17-8 34-1" />
            </g>
          </g>
          <g fill="url(#hole)" stroke="#1c1c22" stroke-width=".8">
            <ellipse cx="1190.500" cy="825" rx="16" ry="12" transform="rotate(-8 1190.500 825)" />
            <ellipse cx="1191" cy="824" rx="12.500" ry="9.500" transform="rotate(-8 1191 824)" />
            <ellipse cx="1432" cy="887" rx="16" ry="12" transform="rotate(-8 1432 887)" />
            <ellipse cx="1433" cy="886" rx="12.500" ry="9.500" transform="rotate(-8 1433 886)" />
          </g>
          <!-- view triad -->
          <g fill="none" stroke-width="1">
            <path d="M811 962 809 952" stroke="#e02020" />
            <path d="M811 962 826 950" stroke="#e02020" />
            <path d="M811 962 832 975 806 977Z" stroke="#bbb" stroke-dasharray="2 1.500" />
          </g>
          <text class="tri r" x="808" y="952">X</text>
          <text class="tri r" x="826" y="950">Y</text>
          <text class="tri w" x="836" y="975">Z</text>
          <path d="M922 714v17l4-4 3 7 3-1-3-7h6Z" fill="#fff" stroke="#000" stroke-width=".8" />
        </svg>
      </div>
    </section>
  </main>

  <footer class="statusbar">
    {#each status as s}
      {#if s.f}
        <span class="field" class:combo={s.combo} style="width:{s.f}px">{s.combo ?? s.t ?? ''}{#if s.combo}<span class="chev cb"></span>{/if}</span>
      {:else if s.x}
        <span class="sslot txt" style="width:{s.w}px">{s.x}</span>
      {:else}
        <span class="sslot" class:on={s.on} style="width:{s.w}px">{#if s.i}{@render ic(s.i, s.s, s.s)}{/if}</span>
      {/if}
    {/each}
  </footer>

  <div class="taskbar">
    <svg class="ic winlogo" width="24" height="24" viewBox="0 0 24 24"><g fill="#1c8fe8"><rect width="11.500" height="11.500" fill="#3cb4f4" /><rect x="12.500" width="11.500" height="11.500" fill="#2ba6f0" /><rect y="12.500" width="11.500" height="11.500" /><rect x="12.500" y="12.500" width="11.500" height="11.500" fill="#0f7ad8" /></g></svg>
    <div class="search">
      <svg class="ic" width="16" height="16" viewBox="0 0 16 16"><circle cx="9.500" cy="6.500" r="5" fill="none" stroke="#222" stroke-width="1.600" /><path d="M6 10.500 1.500 15" stroke="#222" stroke-width="2" /></svg>
      <span>搜索</span>
      <svg class="ic stones" width="50" height="30" viewBox="0 0 50 30"><path d="M0 30 8 22h42v8Z" fill="#6e5f48" /><rect x="6" y="16" width="10" height="10" fill="#f4e8d0" /><rect x="17" y="10" width="9" height="16" fill="#efe2c8" /><path d="M11 11v4M21 5v4" stroke="#f09020" stroke-width="2" /><ellipse cx="38" cy="24" rx="11" ry="4" fill="#3c3c3c" /><ellipse cx="38" cy="17" rx="9" ry="4" fill="#808080" /><ellipse cx="38" cy="10" rx="6" ry="3.500" fill="#8a7050" /><circle cx="38" cy="4" r="3.500" fill="#6a5a48" /></svg>
    </div>
    <div class="tk ie">
      <svg class="ic" width="24" height="28" viewBox="0 0 24 28"><path d="M4 14.500H20A8.500 8.500 0 1 0 18 20" fill="none" stroke="#3fb52c" stroke-width="3.400" /><path d="M4 24Q14 20 21 3" fill="none" stroke="#9ed8f0" stroke-width="1.500" /></svg>
      <i class="dot"></i>
    </div>
    <div class="tk baidu">
      <svg class="ic" width="24" height="24" viewBox="0 0 24 24"><rect width="24" height="24" rx="6" fill="#fff" /><circle cx="12" cy="8.500" r="4.500" fill="none" stroke="#2d7ee8" stroke-width="2.600" /><circle cx="7.500" cy="15" r="4.500" fill="none" stroke="#e04070" stroke-width="2.600" /><circle cx="16.500" cy="15" r="4.500" fill="none" stroke="#36b8e8" stroke-width="2.600" /></svg>
      <i class="dot red"></i>
    </div>
    <div class="tk pm">
      <svg class="ic" width="22" height="30" viewBox="0 0 22 30"><path d="M1 1h15l5 5v23H1Z" fill="#ea6f1a" /><rect x="1" y="19" width="20" height="10" fill="#8a4310" /><text x="6" y="15" font-size="14" font-weight="700" fill="#fff" font-family="Liberation Sans">P</text><text x="6" y="27" font-size="6" font-weight="700" fill="#fff" font-family="Liberation Sans">MIL</text></svg>
      <i class="dot bar"></i>
    </div>
    <div class="tk fold">
      <svg class="ic" width="24" height="24" viewBox="0 0 24 24"><path d="M0 2h10l2 3h12v19H0Z" fill="#f0b428" /><path d="M0 6h24v18H0Z" fill="#fbd850" /><rect x="6" y="15" width="12" height="9" rx="1" fill="#1a86d8" /></svg>
      <i class="dot"></i>
    </div>
    <span class="mark">UG爱好者论坛@zhangwu001314</span>
  </div>

  <!-- hand-drawn markup lying over the screenshot -->
  <svg class="marks" width="1510" height="1078">
    <g fill="none" stroke="#f00" stroke-width="7.500">
      <rect x="30.500" y="220.500" width="323" height="465" rx="3" />
      <rect x="40" y="714" width="255" height="167" rx="3" />
      <rect x="59" y="897" width="218" height="95" rx="3" />
    </g>
    {#each arrows as a}
      {@const ang = Math.atan2(a[1] - a[3], a[0] - a[2])}
      <line x1={a[0]} y1={a[1]} x2={a[2] + (a[0] - a[2]) * 0.15} y2={a[3] + (a[1] - a[3]) * 0.15} stroke="#f00" stroke-width="1.100" />
      <path d="M{a[2]} {a[3]} L{a[2] + 14 * Math.cos(ang + 0.3)} {a[3] + 14 * Math.sin(ang + 0.3)} L{a[2] + 14 * Math.cos(ang - 0.3)} {a[3] + 14 * Math.sin(ang - 0.3)}Z" fill="#f00" />
    {/each}
  </svg>
</div>

<style>
  :global(body) { margin: 0; background: #f0f0f0; }
  .win {
    position: relative;
    width: 1510px;
    height: 1078px;
    overflow: hidden;
    display: flex;
    flex-direction: column;
    background: #f0f0f0;
    color: #222;
    font: 12px/16px "Noto Sans", "Noto Sans CJK SC", sans-serif;
  }
  .defs { position: absolute; }
  .ic { display: block; flex: none; }

  .title { height: 28px; display: flex; align-items: center; flex: none; }
  .qat { display: flex; align-items: center; width: 705px; padding-left: 2px; box-sizing: border-box; }
  .q1 { margin-left: 11px; }
  .q2 { margin-left: 4px; }
  .q3 { margin-left: 3px; }
  .q4 { margin: 0 0 0 6px; }
  .qmore { margin-left: 5px; color: #666; font-size: 10px; }
  .caption { color: #555; letter-spacing: .2px; white-space: nowrap; }
  .doc { margin-left: 16px; }

  .tabs { height: 28px; display: flex; flex: none; align-items: stretch; border-bottom: 1px solid #c8c8c8; box-sizing: border-box; line-height: 27px; }
  .file { width: 50px; background: #666; color: #fff; text-align: center; }
  .tab { padding: 0 14.4px; white-space: nowrap; }
  .tab.on { margin: 0 1px 0 3px; width: 50px; padding: 0; box-sizing: border-box; text-align: center; background: #f7f7f7; border: 1px solid #c8c8c8; border-bottom: 0; height: 28px; }

  .ribbon { flex: none; display: flex; background: #f5f5f5; border-bottom: 2px solid #d0d0d0; box-sizing: content-box; height: 100px; }
  .group { flex: none; box-sizing: border-box; display: flex; flex-direction: column; position: relative; }
  .group::after { content: ""; position: absolute; right: 0; top: 3px; bottom: 3px; width: 1px; background: #c8c8c8; }
  .group:last-child::after { display: none; }
  .items { flex: 1; display: flex; min-height: 0; }
  .glabel { height: 20px; margin-bottom: 3px; text-align: center; line-height: 20px; color: #333; position: relative; }
  .launcher { position: absolute; right: 9px; top: 7px; width: 5px; height: 5px; border-right: 1px solid #777; border-bottom: 1px solid #777; }
  .btn { display: flex; flex-direction: column; align-items: center; padding-top: 6px; flex: none; box-sizing: border-box; white-space: nowrap; }
  .btn .ic { margin: 0 -10px; }
  .blabel { margin-top: 3px; }
  .dis { color: #a8a8a8; }
  .chev { display: block; width: 5px; height: 5px; border-right: 1px solid #666; border-bottom: 1px solid #666; transform: rotate(45deg); margin-top: 1px; }
  .stack { padding: 5px 0 0 3px; }
  .small { height: 23px; display: flex; align-items: center; gap: 2px; white-space: nowrap; }
  .gallery { width: 417px; height: 59px; margin: 8px 0 0 2px; box-sizing: border-box; background: #fff; border: 1px solid #e2e2e2; display: flex; flex: none; }
  .gitem { width: 80px; flex: none; display: flex; flex-direction: column; align-items: center; padding-top: 4px; box-sizing: border-box; white-space: nowrap; }
  .gitem span { margin-top: -1px; }
  .gscroll { margin-left: auto; width: 15px; display: flex; flex-direction: column; }
  .gscroll span { flex: 1; border: 1px solid #e8e8e8; background: #f6f6f6; color: #888; font-size: 8px; line-height: 16px; text-align: center; }

  .panes { flex: 1; min-height: 0; display: flex; }
  .pane { flex: none; display: flex; flex-direction: column; min-height: 0; }
  .left { width: 372px; }
  .mid { width: 413px; }
  .right { flex: 1; min-width: 0; }
  .ptitle { height: 38px; flex: none; display: flex; align-items: center; justify-content: space-between; padding: 0 11px 0 4px; box-sizing: border-box; }
  .ptitle h2 { margin: -2px 0 0; font-size: 21px; font-weight: 400; line-height: 36px; color: #333; white-space: nowrap; }
  .close { font-size: 16px; color: #777; }

  .ltabs { height: 37px; flex: none; display: flex; box-sizing: border-box; border-bottom: 1px solid #c8c8c8; padding-left: 3px; }
  .ltab { width: 35px; display: flex; align-items: center; justify-content: center; }
  .ltab.on { width: 39px; margin-right: -2px; background: #fff; border: 1px solid #c8c8c8; border-bottom: 0; height: 37px; box-sizing: border-box; }
  .treewrap { flex: 1; min-height: 0; display: flex; background: #fff; padding-top: 3px; }
  .tree { width: 350px; flex: none; overflow: hidden; }
  .vscroll { width: 16px; background: #f0f0f0; margin-top: -3px; position: relative; }
  .vscroll i { position: absolute; left: 6px; top: 72px; width: 3px; height: 322px; background: #a0a0a0; }

  .row {
    height: 20px;
    display: flex;
    align-items: center;
    white-space: pre;
    letter-spacing: .1px;
    background-repeat: no-repeat;
    background-size: 1px 100%;
    background-image: repeating-linear-gradient(to bottom, #777 0 1px, transparent 1px 2px);
    background-position: 11px 0;
  }
  .l1 { padding-left: 6px; background-image: none; }
  .l2 { padding-left: 25px; }
  .l3 {
    padding-left: 44px;
    background-image: repeating-linear-gradient(to bottom, #777 0 1px, transparent 1px 2px), repeating-linear-gradient(to bottom, #777 0 1px, transparent 1px 2px);
    background-size: 1px 100%, 1px 100%;
    background-position: 11px 0, 49px 0;
  }
  .exp { width: 11px; height: 11px; flex: none; box-sizing: border-box; border: 1px solid #8c8c8c; background: linear-gradient(#fff, #dfe3ea); position: relative; }
  .exp::before { content: ""; position: absolute; left: 1.5px; right: 1.5px; top: 4px; height: 1px; background: #24367a; }
  .exp::after { content: ""; position: absolute; top: 1.5px; bottom: 1.5px; left: 4px; width: 1px; background: #24367a; }
  .exp.open::after { display: none; }
  .tick { width: 5px; flex: none; border-bottom: 1px dotted #777; }
  .status { width: 16px; flex: none; transform: translateY(-2px); }
  .nostatus { width: 16px; flex: none; }
  .bulb { margin-left: 2px; width: 12px; flex: none; transform: translateY(2px); }
  .opi { width: 20px; flex: none; }
  .tooli { margin-left: 3px; flex: none; transform: translateY(-1px); }
  .lbl { margin-left: 3px; }
  .tl { margin-left: 6px; }
  .fl { margin-left: 3px; padding: 0 3px; line-height: 20px; }
  .hover { background: #eee; }
  .rooti { margin-left: 2px; width: 16px; }

  .frame { margin: 1px 9px 30px 1px; flex: 1; min-height: 0; display: flex; flex-direction: column; border: 1px solid #bbb; box-sizing: border-box; }
  .fhead { height: 33px; flex: none; display: flex; align-items: center; justify-content: space-between; padding: 0 9px 0 4px; }
  .fbody { flex: 1; min-height: 0; display: flex; border-left: 1px solid #bbb; border-top: 1px solid #bbb; }
  .sidetabs { width: 37px; flex: none; background: #f0f0f0; padding: 0 1px 0 3px; box-sizing: border-box; }
  .stab { height: 54px; box-sizing: border-box; border-bottom: 2px solid #888; border-radius: 0 0 2px 2px; display: flex; align-items: center; justify-content: center; padding-top: 2px; }
  .stab.on { background: #fff; }
  .strats { flex: 1; background: #fff; border-left: 1px solid #ccc; border-top: 3px solid #f0f0f0; padding-top: 2px; border-right: 2px solid #aaa; border-bottom: 2px solid #aaa; box-sizing: border-box; }
  .strat {
    height: 22px;
    display: flex;
    align-items: center;
    padding-left: 12px;
    font-size: 14px;
    white-space: nowrap;
    background: repeating-linear-gradient(to bottom, #777 0 1px, transparent 1px 2px) 12px 0 / 1px 100% no-repeat;
  }
  .strat.last { background-size: 1px 50%; }
  .stick { width: 10px; flex: none; border-bottom: 1px dotted #777; }
  .stext { margin-left: 5px; padding: 0 1px; line-height: 19px; height: 20px; }
  .stext.sel { margin-left: 3px; padding: 0 1px 0 3px; background: #0a70c4; color: #dce8f4; outline: 1px dashed #e08a20; }

  .bars { flex: none; height: 73px; background: #f8f8f8; border-top: 1px solid #ccc; box-sizing: border-box; border-bottom: 2px solid #fff; }
  .bar { display: flex; align-items: center; height: 36px; white-space: nowrap; }
  .logo { width: 85px; display: flex; align-items: center; padding-left: 4px; box-sizing: border-box; flex: none; }
  .logo .ic { transform: translateY(-6px); }
  .logo em { font-size: 9px; margin-left: 2px; color: #111; }
  .slot { display: flex; align-items: center; justify-content: center; flex: none; }
  .w33 { width: 33px; }
  .w36 { width: 36px; }
  .w40 { width: 40px; }
  .w44 { width: 44px; }
  .w52 { width: 52px; }
  .w56 { width: 56px; }
  .tcombo { width: 100px; height: 28px; background: #fff; display: flex; align-items: center; padding-left: 5px; box-sizing: border-box; flex: none; position: relative; color: #111; }
  .caret { width: 0; height: 0; border: 3px solid transparent; border-top: 4px solid #222; flex: none; display: block; }
  .tcombo .caret { position: absolute; right: 3px; top: 13px; }
  .c2 { margin-top: 3px; margin-right: 7px; }
  .c3 { margin-right: 2px; }
  .vsep { width: 1px; height: 34px; background: #c8c8c8; margin: 0 5px; flex: none; }
  .s1 { margin: 0 6px 0 5px; }
  .s2 { margin: 0; }
  .r2 { padding-left: 5px; height: 30px; margin-top: 5px; }
  .view { flex: 1; min-height: 0; background: #000; }
  .view svg { display: block; }
  .tri { font: 12px "Liberation Sans", sans-serif; }
  .tri.r { fill: #f02020; }
  .tri.w { fill: #ccc; }

  .statusbar { height: 33px; flex: none; display: flex; align-items: center; background: #f0f0f0; border-top: 1px solid #ddd; box-sizing: border-box; white-space: nowrap; overflow: hidden; }
  .field { height: 23px; flex: none; box-sizing: border-box; background: #efefef; border: 1px solid #e2e2e2; border-bottom: 1px solid #8c8c8c; padding-left: 3px; line-height: 21px; color: #222; position: relative; }
  .field.combo { background: #fff; border-color: #fff; padding-left: 2px; border-radius: 2px; }
  .cb { position: absolute; right: 5px; top: 6px; }
  .sslot { height: 24px; flex: none; display: flex; align-items: center; justify-content: center; box-sizing: border-box; }
  .sslot.txt { padding-left: 3px; }
  .sslot.on { background: #b8dcf8; border: 1px solid #7ab8e8; border-radius: 3px; }

  .taskbar { height: 46px; flex: none; display: flex; align-items: center; background: #cfe6ee; position: relative; }
  .winlogo { margin-left: 21px; }
  .search { margin-left: 13px; width: 218px; height: 30px; box-sizing: border-box; background: #eef7fa; border: 1px solid #dfe8ec; border-radius: 15px; display: flex; align-items: center; padding-left: 10px; gap: 9px; color: #444; font-size: 13px; overflow: hidden; position: relative; }
  .stones { margin-left: auto; }
  .tk { width: 40px; height: 40px; display: flex; flex-direction: column; align-items: center; justify-content: center; gap: 2px; flex: none; border-radius: 5px; margin-top: 2px; position: relative; }
  .ie { margin-left: 5px; }
  .baidu { margin-left: 4px; background: #fbe4e6; }
  .pm { margin-left: 5px; background: #dcecf3; }
  .fold { margin-left: 4px; }
  .dot { width: 5px; height: 3px; background: #666; border-radius: 2px; display: block; }
  .dot.red { background: #d81f26; }
  .dot.bar { width: 16px; background: #1a78d8; }
  .mark { position: absolute; right: 2px; bottom: 3px; font: 14px/18px "Liberation Serif", "Noto Sans CJK SC", serif; color: #777; text-shadow: 1px 1px 0 #fff; letter-spacing: .4px; white-space: nowrap; }

  .marks { position: absolute; left: 0; top: 0; pointer-events: none; }
</style>
